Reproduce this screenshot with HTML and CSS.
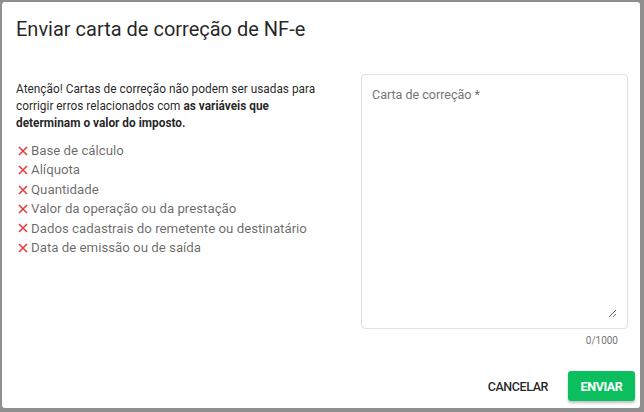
FILE: index.html
```html
<!DOCTYPE html>
<html lang="pt-BR">
<head>
<meta charset="utf-8">
<title>Enviar carta de correção de NF-e</title>
<link rel="stylesheet" href="styles.css">
</head>
<body>
<div class="backdrop">
  <div class="dialog">
    <h2 class="title">Enviar carta de correção de NF-e</h2>
    <div class="content">
      <div class="info">
        <p class="warning">Atenção! Cartas de correção não podem ser usadas para corrigir erros relacionados com <strong>as variáveis que determinam o valor do imposto.</strong></p>
        <ul class="list">
          <li><svg class="x" viewBox="0 0 10 10"><path d="M1 1L9 9M9 1L1 9"/></svg>Base de cálculo</li>
          <li><svg class="x" viewBox="0 0 10 10"><path d="M1 1L9 9M9 1L1 9"/></svg>Alíquota</li>
          <li><svg class="x" viewBox="0 0 10 10"><path d="M1 1L9 9M9 1L1 9"/></svg>Quantidade</li>
          <li><svg class="x" viewBox="0 0 10 10"><path d="M1 1L9 9M9 1L1 9"/></svg>Valor da operação ou da prestação</li>
          <li><svg class="x" viewBox="0 0 10 10"><path d="M1 1L9 9M9 1L1 9"/></svg>Dados cadastrais do remetente ou destinatário</li>
          <li><svg class="x" viewBox="0 0 10 10"><path d="M1 1L9 9M9 1L1 9"/></svg>Data de emissão ou de saída</li>
        </ul>
      </div>
      <div class="field-col">
        <div class="field">
          <textarea class="input" placeholder="Carta de correção *"></textarea>
        </div>
        <div class="counter">0/1000</div>
      </div>
    </div>
    <div class="actions">
      <button class="btn btn-text">CANCELAR</button>
      <button class="btn btn-primary">ENVIAR</button>
    </div>
  </div>
</div>
</body>
</html>
```

FILE: styles.css
```css
html, body {
  margin: 0;
  padding: 0;
  height: 100%;
}
body {
  background: #8f8f8f;
  font-family: Roboto, "Noto Sans", sans-serif;
  overflow: hidden;
}
.backdrop {
  padding: 2px 4px 4px 2px;
}
.dialog {
  width: 638px;
  height: 406px;
  background: #fff;
  border-radius: 3px;
  display: flex;
  flex-direction: column;
  box-sizing: border-box;
}
.title {
  margin: 0;
  padding: 11px 14px 0;
  font-size: 20px;
  line-height: 32px;
  font-weight: 400;
  color: rgba(0, 0, 0, 0.87);
}
.content {
  margin-top: 29px;
  display: grid;
  grid-template-columns: 1fr 267px;
  column-gap: 21px;
  padding: 0 12px 0 14px;
}
.warning {
  margin: 7px 0 0;
  max-width: 306px;
  font-size: 11.85px;
  line-height: 17px;
  color: rgba(0, 0, 0, 0.87);
}
.warning strong {
  font-weight: 700;
}
.list {
  list-style: none;
  margin: 9px 0 0;
  padding: 0;
  font-size: 13.25px;
  line-height: 19.4px;
  color: rgba(0, 0, 0, 0.6);
}
.list li {
  display: flex;
  align-items: center;
}
.x {
  width: 10px;
  height: 10px;
  margin: 0 3px 0 2px;
  fill: none;
  stroke: #e53935;
  stroke-width: 1.5;
}
.field {
  height: 255px;
  box-sizing: border-box;
  border: 1px solid #e0e0e0;
  border-radius: 4px;
  padding: 10px;
  display: flex;
}
.input {
  flex: 1;
  margin: 0;
  padding: 0;
  border: none;
  outline: none;
  resize: vertical;
  font-family: Roboto, "Noto Sans", sans-serif;
  font-size: 12.5px;
  line-height: 20px;
  color: rgba(0, 0, 0, 0.87);
  background: transparent;
}
.input::placeholder {
  color: #757575;
  opacity: 1;
}
.counter {
  margin-top: 5px;
  padding-right: 10px;
  text-align: right;
  font-size: 10px;
  line-height: 14px;
  color: #757575;
}
.actions {
  margin-top: auto;
  display: flex;
  justify-content: flex-end;
  align-items: center;
  gap: 12px;
  padding: 0 5px 7px;
}
.btn {
  height: 30px;
  border: none;
  border-radius: 3px;
  font-family: Roboto, "Noto Sans", sans-serif;
  cursor: pointer;
}
.btn-text {
  background: transparent;
  color: rgba(0, 0, 0, 0.87);
  padding: 0 8px;
  font-size: 12.5px;
  font-weight: 500;
  letter-spacing: -0.4px;
}
.btn-primary {
  width: 67px;
  padding: 0;
  background: #0bbf5f;
  color: #fff;
  font-weight: 700;
  font-size: 12.5px;
  letter-spacing: -0.4px;
  box-shadow: 0 2px 3px rgba(0, 0, 0, 0.25);
}
```
